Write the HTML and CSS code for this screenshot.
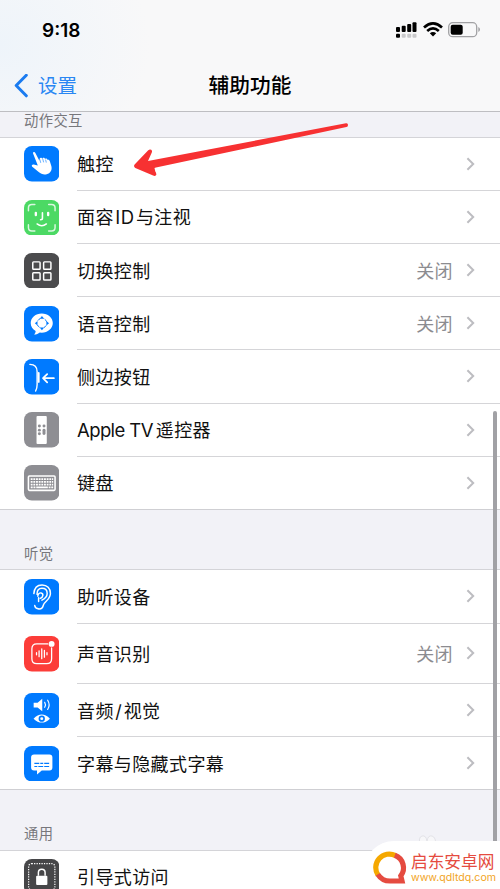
FILE: index.html
```
<!DOCTYPE html>
<html lang="zh-CN">
<head>
<meta charset="utf-8">
<title>辅助功能</title>
<link rel="stylesheet" href="styles.css">
</head>
<body>
<svg class="defs" width="0" height="0"><defs>
<symbol id="chev" viewBox="0 0 9 14"><path d="M1.4 1.2 7.2 7 1.4 12.8" fill="none" stroke="#bdbdc1" stroke-width="2"/></symbol>
</defs></svg>
<div class="screen">
  <header class="top">
    <div class="status">
      <span class="time">9:18</span>
      <svg class="sys" width="86" height="18" viewBox="0 0 86 18">
        <g fill="#000"><rect x="1" y="6" width="4" height="5" rx="1"/><rect x="6.7" y="4.7" width="4" height="6.3" rx="1"/><rect x="12.2" y="3" width="4" height="8" rx="1"/><rect x="17.5" y="1.3" width="4" height="9.7" rx="1"/><rect x="1" y="12.8" width="4" height="4" rx="1"/></g>
        <g fill="#c9c9cb"><rect x="6.7" y="12.8" width="4" height="4" rx="1"/><rect x="12.2" y="12.8" width="4" height="4" rx="1"/><rect x="17.5" y="12.8" width="4" height="4" rx="1"/></g>
        <g fill="none" stroke="#000" stroke-width="2.7"><path d="M29 6.5Q38 -1.6 47 6.5"/><path d="M32.2 10Q38 4.8 43.8 10"/></g><path d="M34.8 12.2Q38 9.7 41.2 12.2L38 15.4Z"/>
        <rect x="53.7" y="1.7" width="28" height="14" rx="4" fill="none" stroke="#a1a1a4" stroke-width="1.3"/><rect x="55.7" y="3.7" width="12" height="10" rx="2"/><path d="M83.3 6v5q1.7-.7 1.7-2.5T83.3 6" fill="#a1a1a4"/>
      </svg>
    </div>
    <nav class="nav">
      <div class="back"><svg width="15" height="24" viewBox="0 0 15 24"><path d="M12.3 1.2 2.2 11.500l10.100 10.300" fill="none" stroke="#1a7bf0" stroke-width="3" stroke-linecap="round" stroke-linejoin="round"/></svg><span>设置</span></div>
      <h1>辅助功能</h1>
    </nav>
  </header>

  <h2 class="first">动作交互</h2>
  <ul>
    <li><svg class="ic" viewBox="0 0 36 36"><rect width="36" height="36" rx="8" fill="#007aff"/><path d="M9.2 7.5C8.7 6.2 10.8 5.5 11.5 7l4 7.8.5-2.2c.6-1.3 2.3-.8 2.5.5l.4-.8c.9-1 2.3-.3 2.5.9.8-1 2.3-.4 2.5.9 1-.6 2 0 2.3 1.3l1.6 5.1c.9 3.900-1 7.200-4.800 8.100-3.300.7-5.600-.2-8.100-2.300l-6.500-5.200c-1.200-1.100-.2-2.700 1.500-2.400l4.100 1.200Z" fill="#fff"/><path d="m16 13.500 1 3.600m2-4 .9 3.500m2-2.800.7 3" stroke="#007aff" stroke-width=".6"/></svg><div class="cell"><span>触控</span><svg class="chev"><use href="#chev"/></svg></div></li>
    <li><svg class="ic" viewBox="0 0 36 36"><rect width="36" height="36" rx="8" fill="#4cd964"/><g fill="none" stroke="#fff" stroke-linecap="round"><path d="M4.500 11V8q0-3.500 3.500-3.500h3M25 4.500h3q3.500 0 3.500 3.500v3M31.500 25v3q0 3.500-3.500 3.500h-3M11 31.500H8q-3.500 0-3.500-3.500v-3" stroke-width="1.500" opacity=".8"/><path d="M12 13v2.200M24.500 13v2.200" stroke-width="2.400"/><path d="M18.700 13v5.500q0 1.500-1.900 1.500M13.300 24.300q4.700 3.500 9.400 0" stroke-width="1.600"/></g></svg><div class="cell"><span>面容<i class="lat">ID</i>与注视</span><svg class="chev"><use href="#chev"/></svg></div></li>
    <li><svg class="ic" viewBox="0 0 36 36"><rect width="36" height="36" rx="8" fill="#4b4b4d"/><g fill="none" stroke="#fff" stroke-width="1.500"><rect x="8.900" y="9" width="7.400" height="7.400" rx=".8"/><rect x="19.900" y="9" width="7.400" height="7.400" rx=".8"/><rect x="8.900" y="20" width="7.400" height="7.400" rx=".8"/><rect x="19.900" y="20" width="7.400" height="7.400" rx=".8"/></g></svg><div class="cell"><span>切换控制</span><em>关闭</em><svg class="chev"><use href="#chev"/></svg></div></li>
    <li><svg class="ic" viewBox="0 0 36 36"><rect width="36" height="36" rx="8" fill="#007aff"/><path d="M18 7.500c6.200 0 11.200 4.300 11.200 9.700S24.200 27 18 27l-2-.1c-1.500 1.300-3.200 2.100-5.800 2.100 1-1 1.600-2 1.600-3.600-3-1.800-5-4.700-5-8.200 0-5.400 5-9.700 11.200-9.700Z" fill="#fff"/><circle cx="18.200" cy="17.400" r="4.900" fill="none" stroke="#007aff" stroke-width="1" stroke-dasharray="3 4.700" stroke-dashoffset="-2.350"/><path d="m18.200 10.200 2.300 2.700h-4.600zm0 14.400 2.300-2.700h-4.600zM11 17.400l2.700-2.300v4.600zm14.400 0-2.700-2.300v4.600z" fill="#007aff"/></svg><div class="cell"><span>语音控制</span><em>关闭</em><svg class="chev"><use href="#chev"/></svg></div></li>
    <li><svg class="ic" viewBox="0 0 36 36"><rect width="36" height="36" rx="8" fill="#007aff"/><g fill="none" stroke="#fff" stroke-linecap="round" stroke-linejoin="round"><path d="M6 5.500c5 0 7.300 2.200 7.300 7.500v13c0 3-.8 5-1.500 6.500" stroke-width="1.400"/><path d="M14.900 14.200v9" stroke-width="1.900"/><path d="M30.300 19.500H19.500m4-4.200-4.200 4.200 4.200 4.200" stroke-width="1.800"/></g></svg><div class="cell"><span>侧边按钮</span><svg class="chev"><use href="#chev"/></svg></div></li>
    <li><svg class="ic" viewBox="0 0 36 36"><rect width="36" height="36" rx="8" fill="#8e8e93"/><rect x="12.700" y="4" width="10.400" height="28.500" rx="1" fill="#fff"/><g fill="#8e8e93"><circle cx="15.600" cy="14.200" r="1.500"/><circle cx="20.300" cy="14.200" r="1.500"/><circle cx="15.600" cy="18.400" r="1.500"/><rect x="18.800" y="16.900" width="3" height="6.500" rx="1.500"/><circle cx="15.600" cy="22" r="1.500"/></g></svg><div class="cell"><span><i class="lat tv">Apple TV</i>遥控器</span><svg class="chev"><use href="#chev"/></svg></div></li>
    <li class="last"><svg class="ic" viewBox="0 0 36 36"><rect width="36" height="36" rx="8" fill="#8e8e93"/><rect x="4.500" y="11.200" width="27" height="14.500" rx="1" fill="none" stroke="#fff" stroke-width="1.600"/><g stroke="#fff" stroke-width="1.900" stroke-dasharray="1.900 .8"><path d="M6.800 14.300h22.800M6.800 17.100h22.800M6.800 19.900h22.800"/></g><path d="M6.800 22.700h2m.8 0h2m.8 0h11.800m.8 0h1.900m.8 0h1.900" stroke="#fff" stroke-width="1.700"/></svg><div class="cell"><span>键盘</span><svg class="chev"><use href="#chev"/></svg></div></li>
  </ul>

  <h2>听觉</h2>
  <ul>
    <li><svg class="ic" viewBox="0 0 36 36"><rect width="36" height="36" rx="8" fill="#007aff"/><g fill="none" stroke="#fff" stroke-width="1.500" stroke-linecap="round"><path d="M10 14.800C10.400 9.200 13.700 6 18.300 6c5.200 0 8.500 3.700 8.500 8.500 0 6.900-6 7.600-7.200 12.100-.8 3-3 4.200-5.400 3.600-2-.5-3-1.700-3.300-3.300"/><path d="M13.200 15.400c0-3.800 2-6 5-6 3.200 0 5.300 2.200 5.300 5.300 0 3.600-2.500 5.400-5.300 6.800M14 17.400c.2-2.500 1.800-3.500 3.300-3.300 2.600.5 2.500 4.200-.8 5.500M14.800 19v3.800"/></g></svg><div class="cell"><span>助听设备</span><svg class="chev"><use href="#chev"/></svg></div></li>
    <li class="tall"><svg class="ic" viewBox="0 0 36 36"><rect width="36" height="36" rx="8" fill="#fc3d39"/><path d="M24 8H13q-5 0-5 5v10q0 5 5 5h10q5 0 5-5V12" fill="none" stroke="#fff" stroke-width="1.300" stroke-linecap="round"/><circle cx="28" cy="8" r="3" fill="#fff"/><path d="M12.700 17v2M15.300 15v6M18 13v10M20.700 14.500v7M23.300 17v2" stroke="#fff" stroke-width="1.300" stroke-linecap="round"/></svg><div class="cell"><span>声音识别</span><em>关闭</em><svg class="chev"><use href="#chev"/></svg></div></li>
    <li><svg class="ic" viewBox="0 0 36 36"><rect width="36" height="36" rx="8" fill="#007aff"/><path d="M9.800 9.800h4l4.700-4v12.700l-4.700-3.800h-4z" fill="#fff"/><g fill="none" stroke="#fff" stroke-width="1.200" stroke-linecap="round"><path d="M21 9.500q1.600 2.500 0 5M24 7.300q3 4.700 0 9.400"/></g><path d="M9.700 26q8.300-8.300 16.600 0-8.300 8-16.600 0Z" fill="#fff"/><circle cx="18" cy="26" r="3.200" fill="#007aff"/><circle cx="18" cy="26" r="1.500" fill="#fff"/></svg><div class="cell"><span>音频<i class="slash">/</i>视觉</span><svg class="chev"><use href="#chev"/></svg></div></li>
    <li class="last"><svg class="ic" viewBox="0 0 36 36"><rect width="36" height="36" rx="8" fill="#007aff"/><path d="M10.200 8.500h15.600q3 0 3 3v10.300q0 3-3 3H18L13.200 29v-4.200h-3q-3 0-3-3V11.500q0-3 3-3Z" fill="#fff"/><path d="M10.500 17.700h5m1 0h3m1 0h5M10.500 20.800h3m1 0h5m1 0h5" stroke="#007aff" stroke-width="1.200"/></svg><div class="cell"><span>字幕与隐藏式字幕</span><svg class="chev"><use href="#chev"/></svg></div></li>
  </ul>

  <h2>通用</h2>
  <ul>
    <li class="last"><svg class="ic" viewBox="0 0 36 36"><rect width="36" height="36" rx="8" fill="#464648"/><rect x="4.700" y="4.700" width="26.600" height="26.600" rx="3" fill="none" stroke="#fff" stroke-width="1.200" stroke-dasharray="1.300 1.200"/><rect x="12.300" y="17" width="11.400" height="9.300" rx="1" fill="#fff"/><path d="M14.600 17v-3.200q0-3.500 3.400-3.500t3.400 3.500V17" fill="none" stroke="#fff" stroke-width="1.500"/></svg><div class="cell"><span>引导式访问</span></div></li>
  </ul>

  <svg class="arrow" width="220" height="60" viewBox="0 0 220 60"><path d="M216 4.300Q218 4 218 6t-1.600 2L26 48.500l-1.500.5 1 4.500q1.300 1.200.6 2.600-1 1.400-3 .5L5.300 48.900Q3.200 47.600 4.600 45.600L18 31.500q1.600-1.700 3.200-.8 1.300 1 .6 2.700L18 42Z" fill="#f73132"/><path d="m22 48 4 6-2 2-14-8Z" fill="#f73132"/></svg>
  <div class="scroll"></div>
  <svg class="paw" width="20" height="12" viewBox="0 0 20 12"><path d="M2 12Q0 3 4 2t5 5q1-6 5-5t4 10" fill="#f7f7f9" stroke="#e3e3e8"/></svg>
  <div class="mark">
    <svg width="35" height="35" viewBox="0 0 35 35"><g fill="none" stroke-width="5.200"><path d="M22.500 5.600A13.500 13.500 0 0 0 5 25" stroke="#f5a800"/><path d="M21.800 5.300C30.500 8.500 33 19 27.800 25.800L29 31H17C11.500 31 7.500 28.500 4.800 24.300" stroke="#e54b40"/></g></svg>
    <div class="words"><b>启东安卓网</b><span>www.qdltdq.com</span></div>
  </div>
</div>
</body>
</html>
```
FILE: styles.css
```
* { box-sizing: border-box; }
body { margin: 0; font-family: "Inter", "Noto Sans CJK SC", sans-serif; color: #111; }
.defs { position: absolute; }
.screen { position: relative; width: 500px; height: 889px; overflow: hidden; background: #f2f2f7; }
.top { height: 112px; background: radial-gradient(ellipse 150px 130px at 0 45px, #eef4fa, rgba(247,248,249,0)) #f8f8f9; border-bottom: 1px solid #bebec2; }
.status { height: 60px; padding: 21px 19px 0 42px; display: flex; justify-content: space-between; align-items: flex-start; }
.time { font-size: 19px; line-height: 19px; font-weight: 600; color: #000; }
.nav { height: 51px; display: grid; grid-template-columns: 1fr auto 1fr; align-items: center; padding: 0 14px; }
.back { display: flex; align-items: center; gap: 9px; color: #2a87f3; font-size: 19.500px; line-height: 24px; }
h1 { margin: 0; font-size: 20.700px; line-height: 24px; font-weight: 500; color: #000; }
h2 { margin: 0; height: 60.300px; padding: 33px 24px 0; font-size: 14.300px; line-height: 22px; font-weight: 400; letter-spacing: .4px; color: #77777c; border-bottom: 1px solid #d4d4d8; }
h2.first { height: 25.600px; padding-top: 0; line-height: 18px; }
ul { margin: 0; padding: 0; list-style: none; background: #fff; border-bottom: 1px solid #cfcfd3; }
li { height: 53.200px; display: flex; align-items: center; padding-left: 23.500px; gap: 18px; }
li.last { height: 52.300px; }
li.tall { height: 60.500px; }
.ic { width: 35.500px; height: 35.500px; flex: none; }
.cell { flex: 1; height: 100%; display: flex; align-items: center; padding-right: 25px; border-bottom: 1px solid #d5d5d8; font-size: 18px; line-height: 26px; letter-spacing: .4px; }
.last .cell { border-bottom: 0; }
.cell span { flex: 1; padding-top: 3px; }
.cell em { font-style: normal; color: #8c8c90; margin-right: 13px; padding-top: 3px; }
.chev { width: 9px; height: 14px; }
.lat { font-style: normal; font-size: 18.500px; line-height: 20px; margin: 0 1.500px; }
.tv { margin: 0 3px 0 0; letter-spacing: -.6px; }
.slash { font-style: normal; margin: 0 1.500px; }
.arrow { position: absolute; left: 130px; top: 119px; }
.scroll { position: absolute; left: 493px; top: 411px; width: 4px; height: 435px; border-radius: 2px; background: #a1a1a5; }
.paw { position: absolute; left: 418px; top: 834px; }
.mark { position: absolute; left: 364px; top: 841px; width: 136px; height: 48px; padding: 9px 0 0 9px; display: flex; gap: 3px; background: #fff; border-radius: 30px 0 0 0; }
.mark svg { flex: none; }
.words { display: flex; flex-direction: column; white-space: nowrap; padding-top: 3px; }
.words b { font-size: 16.700px; line-height: 19px; height: 19px; font-weight: 400; color: #e54b40; }
.words span { font-size: 10.600px; line-height: 12px; color: #f2a51f; }
```
